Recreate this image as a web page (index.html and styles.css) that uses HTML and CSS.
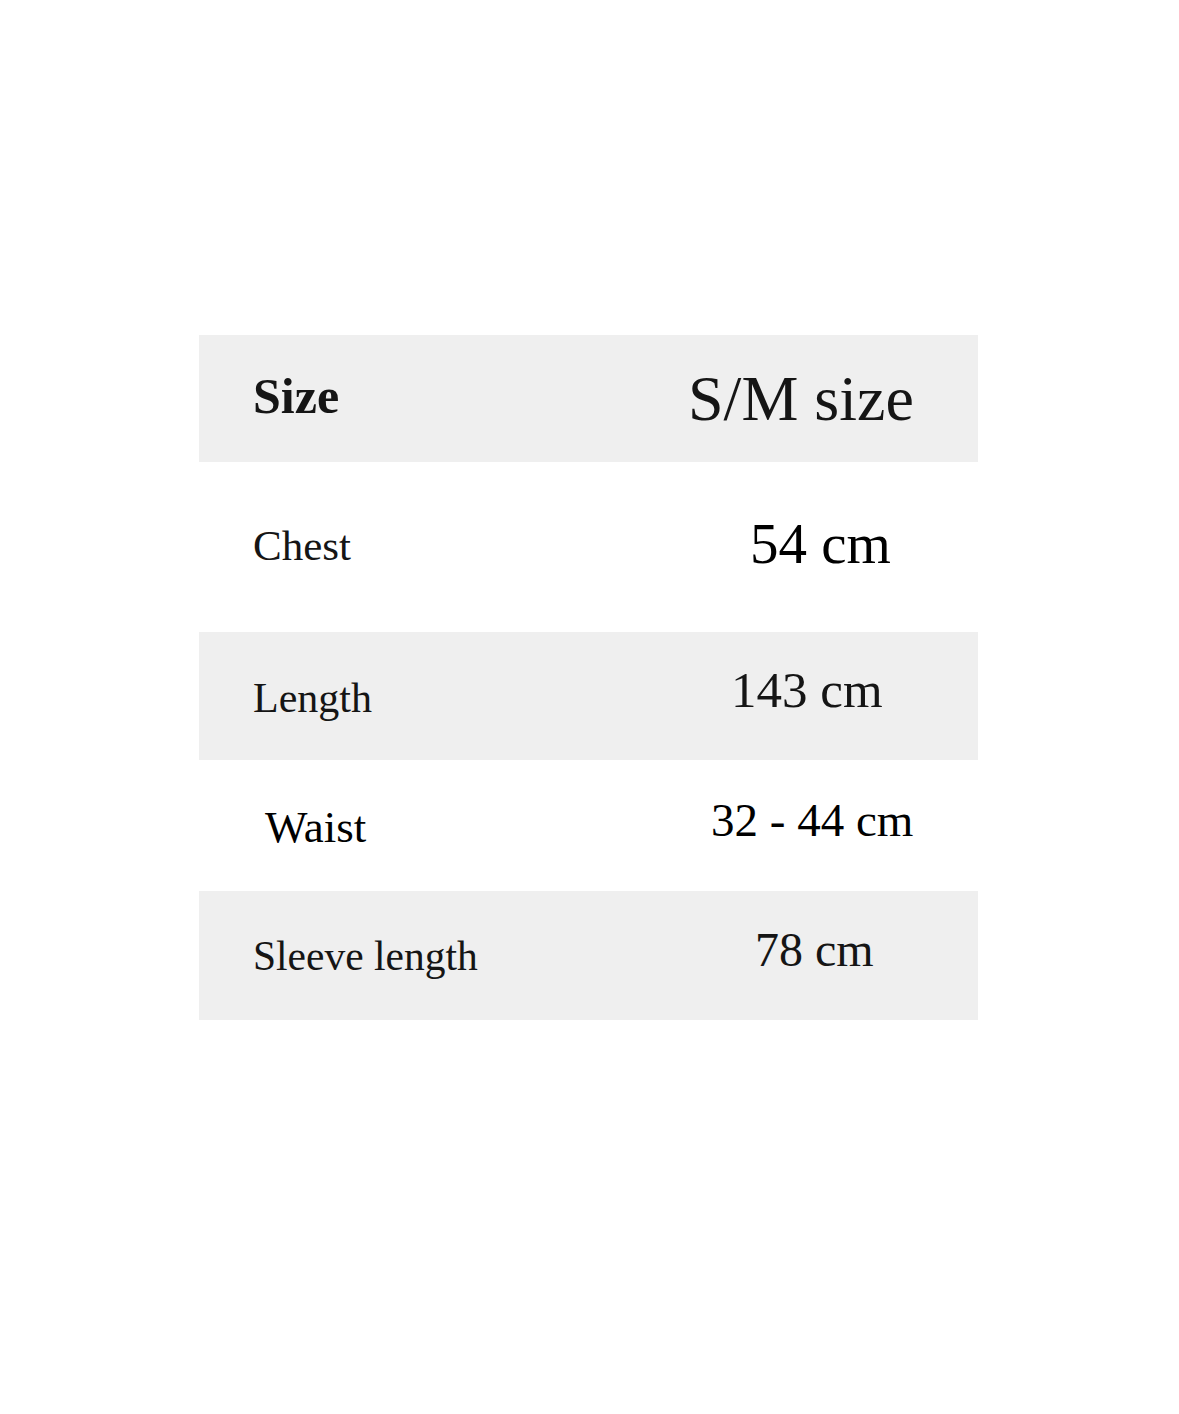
FILE: index.html
```html
<!DOCTYPE html>
<html lang="en">
<head>
<meta charset="utf-8">
<title>Size chart</title>
<link rel="stylesheet" href="styles.css">
</head>
<body>
<div class="chart">
  <div class="row row-head shaded">
    <div class="label label-head">Size</div>
    <div class="value value-head">S/M size</div>
  </div>
  <div class="row row-chest">
    <div class="label label-chest">Chest</div>
    <div class="value value-chest">54 cm</div>
  </div>
  <div class="row row-length shaded">
    <div class="label label-length">Length</div>
    <div class="value value-length">143 cm</div>
  </div>
  <div class="row row-waist">
    <div class="label label-waist">Waist</div>
    <div class="value value-waist">32 - 44 cm</div>
  </div>
  <div class="row row-sleeve shaded">
    <div class="label label-sleeve">Sleeve length</div>
    <div class="value value-sleeve">78 cm</div>
  </div>
</div>
</body>
</html>
```
FILE: styles.css
```css
html, body {
  margin: 0;
  padding: 0;
  background: #ffffff;
}

body {
  font-family: "Liberation Serif", "Times New Roman", serif;
  color: #151515;
}

.chart {
  width: 779px;
  margin: 335px 0 0 199px;
  display: flex;
  flex-direction: column;
}

.row {
  display: grid;
  grid-template-columns: 489px 1fr;
  align-items: start;
  box-sizing: border-box;
}

.shaded {
  background: #efefef;
}

.label,
.value {
  line-height: 1;
  white-space: nowrap;
}

.label {
  padding-left: 54px;
}

.row-head { height: 127px; }
.row-chest { height: 170px; }
.row-length { height: 128px; }
.row-waist { height: 131px; }
.row-sleeve { height: 129px; }

.label-head {
  font-size: 50px;
  font-weight: bold;
  padding-top: 36px;
}
.value-head {
  font-size: 64px;
  padding-top: 32px;
}

.label-chest {
  font-size: 43px;
  padding-top: 62px;
}
.value-chest {
  font-size: 57px;
  padding-top: 53px;
  padding-left: 62px;
  color: #000;
}

.label-length {
  font-size: 42px;
  padding-top: 45px;
}
.value-length {
  font-size: 51px;
  padding-top: 33px;
  padding-left: 43px;
}

.label-waist {
  font-size: 45px;
  padding-top: 45px;
  padding-left: 66px;
  color: #000;
}
.value-waist {
  font-size: 47px;
  padding-top: 37px;
  padding-left: 23px;
  color: #000;
}

.label-sleeve {
  font-size: 41.5px;
  padding-top: 45px;
}
.value-sleeve {
  font-size: 48px;
  padding-top: 35px;
  padding-left: 67px;
}
```
